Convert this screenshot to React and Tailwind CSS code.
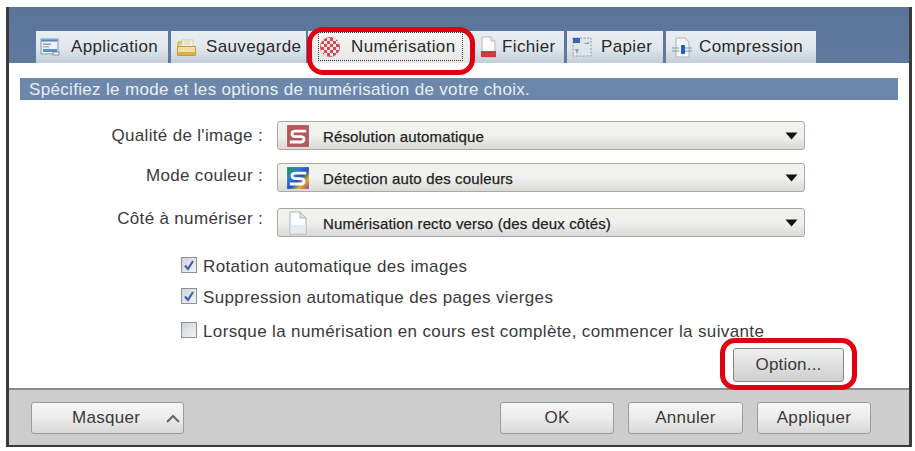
import React from "react";

const FONT = "font-['Liberation_Sans',Arial,sans-serif]";

function AppIcon() {
  return (
    <svg width="21" height="21" viewBox="0 0 21 21">
      <rect x="1" y="2" width="17" height="15" fill="#eef2f6" stroke="#7f97b5" />
      <rect x="1.5" y="2.5" width="16" height="2" fill="#5c83b8" />
      <rect x="3" y="6.5" width="8" height="1.5" fill="#8aa0b8" />
      <rect x="3" y="9" width="6" height="1.5" fill="#a9b8c8" />
      <rect x="3" y="12" width="14" height="3" fill="#4a97d8" />
      <path d="M13 15h6v3h-6z" fill="#f4f6f8" stroke="#667" strokeWidth="0.7" />
    </svg>
  );
}
function FolderIcon() {
  return (
    <svg width="21" height="21" viewBox="0 0 21 21">
      <path d="M2 10V5h4l1 1" fill="#e6cd7e" stroke="#c8a84e" />
      <rect x="6" y="3" width="11" height="8" fill="#f7f5e8" stroke="#c9bd8c" strokeWidth="0.7" />
      <path d="M8 5h7M8 7h7" stroke="#c4c4b4" strokeWidth="0.7" />
      <path d="M1.5 9.5h18v9h-18z" fill="#f0df9e" stroke="#c49b3c" />
      <path d="M2 15h17v3H2z" fill="#dcae4a" />
    </svg>
  );
}
function ScanIcon() {
  const dots = [];
  for (let y = 0; y < 6; y++)
    for (let x = 0; x < 6; x++)
      if ((x + y) % 2 === 0) dots.push(<rect key={x + "-" + y} x={2 + x * 3} y={2 + y * 3} width="3" height="3" fill="#f8e8e8" />);
  return (
    <svg width="22" height="22" viewBox="0 0 22 22">
      <defs>
        <clipPath id="scanclip">
          <circle cx="11" cy="11" r="10" />
        </clipPath>
      </defs>
      <circle cx="11" cy="11" r="10" fill="#cf4c50" />
      <g clipPath="url(#scanclip)">{dots}</g>
    </svg>
  );
}
function FileIcon() {
  return (
    <svg width="21" height="22" viewBox="0 0 21 22">
      <path d="M4 1h9l4 4v16H4z" fill="#fafafa" stroke="#b9b9b9" />
      <path d="M13 1v4h4" fill="#e8e8e8" stroke="#b9b9b9" />
      <path d="M3 15h15v6H3z" fill="#d13a3a" />
    </svg>
  );
}
function PaperIcon() {
  return (
    <svg width="22" height="22" viewBox="0 0 22 22">
      <rect x="2" y="2" width="18" height="18" fill="#dde6ea" stroke="#8c9aa6" strokeDasharray="2 1.5" />
      <rect x="2" y="2" width="7" height="5" fill="#3a64b0" />
      <path d="M12 8l6-2v2zM6 18l-2-5h4z" fill="#8fa2b0" />
    </svg>
  );
}
function CompressIcon() {
  return (
    <svg width="22" height="22" viewBox="0 0 22 22">
      <path d="M5 2h9l4 4v15H5z" fill="#f5f7f9" stroke="#aab4be" />
      <path d="M1 12h7M14 12h7M1 15h7M14 15h7" stroke="#7f93a8" />
      <rect x="10" y="9" width="4" height="9" fill="#1c63c0" />
    </svg>
  );
}

function SLogo({ bg }) {
  return (
    <svg width="24" height="24" viewBox="0 0 22 22" className="shrink-0">
      {bg === "rainbow" ? (
        <>
          <defs>
            <linearGradient id="rainbow" x1="0" y1="0" x2="1" y2="1">
              <stop offset="0" stopColor="#1f9a3e" />
              <stop offset="0.3" stopColor="#2a7fd0" />
              <stop offset="0.55" stopColor="#2b4fb8" />
              <stop offset="0.75" stopColor="#d9b21f" />
              <stop offset="1" stopColor="#b52bb0" />
            </linearGradient>
          </defs>
          <rect x="1" y="1" width="20" height="20" fill="url(#rainbow)" />
        </>
      ) : (
        <rect x="1" y="1" width="20" height="20" fill="#b4585c" />
      )}
      <path d="M18.5 6.5H9Q5.5 6.5 5.5 9t3 2.5h5q3 0 3 2.5t-3 2.5H3.5" fill="none" stroke="#fff" strokeWidth="2.6" />
    </svg>
  );
}
function DocIcon() {
  return (
    <svg width="22" height="24" viewBox="0 0 22 24" className="shrink-0">
      <path d="M3 1h10l6 6v16H3z" fill="#fbfcfd" stroke="#a9b1bc" />
      <path d="M13 1v6h6z" fill="#dfe4ea" stroke="#a9b1bc" />
      <path d="M3.5 14h15v8.500h-15z" fill="#e6ebf1" />
    </svg>
  );
}

const tabs = [
  { label: "Application", icon: <AppIcon />, cls: "w-[132px] mr-[3px] pl-[4px]", gap: "ml-[10px]" },
  { label: "Sauvegarde", icon: <FolderIcon />, cls: "w-[135px] mr-[2px] pl-[5px]", gap: "ml-[9px]" },
  { label: "Numérisation", icon: <ScanIcon />, active: true, cls: "w-[165px] mr-0 pl-[11px]", gap: "ml-[10px]" },
  { label: "Fichier", icon: <FileIcon />, cls: "w-[91px] mr-[3px] pl-[5px]", gap: "ml-[3px]" },
  { label: "Papier", icon: <PaperIcon />, cls: "w-[96px] mr-[3px] pl-[4px]", gap: "ml-[8px]" },
  { label: "Compression", icon: <CompressIcon />, cls: "w-[150px] pl-[5px]", gap: "ml-[6px]" },
];

function Tab({ tab }) {
  return (
    <div
      className={`flex h-[32px] shrink-0 items-center whitespace-nowrap text-[17px] tracking-[0.36px] text-[#2a2a2a] ${tab.cls} ${
        tab.active
          ? "bg-gradient-to-b from-[#f6f6f6] to-[#e6e6e6]"
          : "bg-gradient-to-b from-[#e9eef3] via-[#e2e8ee] to-[#c2ced9]"
      }`}
    >
      {tab.icon}
      <span className={tab.gap}>{tab.label}</span>
    </div>
  );
}

function Row({ label, icon, value, cls, labelCls }) {
  return (
    <div className={`flex h-[29px] items-center ${cls}`}>
      <div className={`w-[254px] whitespace-nowrap text-right text-[17px] tracking-[0.33px] text-[#3a3a3a] ${labelCls}`}>{label}</div>
      <div className="ml-[14px] flex h-[29px] w-[528px] items-center rounded-[3px] border border-[#a9a9a2] bg-gradient-to-b from-[#f2f2ef] via-[#f0f0ed] to-[#d9d9d9] pl-[8px] pr-[6px]">
        <div className="flex w-[24px] justify-center">{icon}</div>
        <span className="ml-[13px] flex-1 pt-[3px] text-[15px] tracking-[0.15px] text-[#222] [-webkit-text-stroke:0.25px_#222]">{value}</span>
        <svg width="13" height="8" viewBox="0 0 13 8">
          <path d="M0.500 0.500h12L6.500 7.500z" fill="#111" />
        </svg>
      </div>
    </div>
  );
}

function Check({ checked, label, cls }) {
  return (
    <div className={`ml-[172px] flex h-[16px] items-center ${cls}`}>
      <div className="flex h-[16px] w-[16px] shrink-0 items-center justify-center border border-[#8e9398] bg-gradient-to-br from-[#cfd3d8] to-[#f2f3f5]">
        {checked && (
          <svg width="12" height="12" viewBox="0 0 12 12">
            <path d="M2 6.500l3 3.500 5-8" fill="none" stroke="#3c5fb5" strokeWidth="2.2" />
          </svg>
        )}
      </div>
      <span className="ml-[6px] whitespace-nowrap pt-[3px] text-[17px] tracking-[0.36px] text-[#3a3a3a]">{label}</span>
    </div>
  );
}

function Btn({ children, cls }) {
  return (
    <div className={`flex h-[32px] items-center rounded-[3px] border border-[#9c9c9c] bg-gradient-to-b from-[#f6f6f6] via-[#ececec] to-[#d8d8d8] text-[17px] tracking-[0.3px] text-[#3a3a3a] ${cls}`}>
      {children}
    </div>
  );
}

export default function App() {
  return (
    <div className={`h-[451px] w-[915px] overflow-hidden bg-white pl-[6px] pt-[7px] ${FONT}`}>
      <div className="relative flex h-[440px] w-[906px] flex-col border-x-[3px] border-b-[2px] border-x-[#3a3a3a] border-b-[#3a3a3a] bg-white">
        <div className="flex h-[56px] shrink-0 items-end bg-gradient-to-b from-[#5a759a] to-[#5f7a9e] pl-[27px]">
          {tabs.map((t) => (
            <Tab key={t.label} tab={t} />
          ))}
        </div>

        <div className="flex flex-1 flex-col bg-white pt-[15px]">
          <div className="mx-[11px] flex h-[22px] shrink-0 items-center whitespace-nowrap bg-[#6d87ab] pl-[9px] pt-[1px] text-[17px] tracking-[0.33px] text-[#e8eef5]">
            Spécifiez le mode et les options de numérisation de votre choix.
          </div>
          <Row cls="mt-[21px]" labelCls="" label="Qualité de l'image :" icon={<SLogo />} value="Résolution automatique" />
          <Row cls="mt-[13px]" labelCls="pb-[3px]" label="Mode couleur :" icon={<SLogo bg="rainbow" />} value="Détection auto des couleurs" />
          <Row cls="mt-[16px]" labelCls="pb-[7px] tracking-[0.1px]" label="Côté à numériser :" icon={<DocIcon />} value="Numérisation recto verso (des deux côtés)" />
          <Check cls="mt-[20px]" checked label="Rotation automatique des images" />
          <Check cls="mt-[15px]" checked label="Suppression automatique des pages vierges" />
          <Check cls="mt-[18px]" label="Lorsque la numérisation en cours est complète, commencer la suivante" />
          <div className="mt-[10px] flex justify-end pr-[65px]">
            <div className="flex h-[34px] w-[111px] items-center justify-center rounded-[3px] border border-[#7f8c86] bg-gradient-to-b from-[#f0f0f0] to-[#cfcfcf] text-[17px] tracking-[0.2px] text-[#3a3a3a]">
              Option...
            </div>
          </div>
        </div>

        <div className="flex h-[57px] shrink-0 items-center border-t-2 border-t-[#8c8c8c] bg-[#cdcdcd] pl-[22px] pt-[1px]">
          <Btn cls="relative w-[153px] pl-[40px]">
            <span>Masquer</span>
            <svg className="absolute right-[3px] top-[11px]" width="14" height="9" viewBox="0 0 14 9">
              <path d="M1 8l6-6 6 6" fill="none" stroke="#666" strokeWidth="2" />
            </svg>
          </Btn>
          <Btn cls="ml-[316px] w-[114px] justify-center">OK</Btn>
          <Btn cls="ml-[14px] w-[115px] justify-center">Annuler</Btn>
          <Btn cls="ml-[14px] w-[114px] justify-center">Appliquer</Btn>
        </div>

        <div className="pointer-events-none absolute left-[298px] top-[20px] h-[48px] w-[168px] rounded-[16px] border-[5px] border-[#e00010]" />
        <div className="pointer-events-none absolute left-[309px] top-[25px] h-[29px] w-[145px] border border-dotted border-[#333]" />
        <div className="pointer-events-none absolute left-[711px] top-[331px] h-[52px] w-[137px] rounded-[15px] border-[5px] border-[#e00010]" />
      </div>
    </div>
  );
}
